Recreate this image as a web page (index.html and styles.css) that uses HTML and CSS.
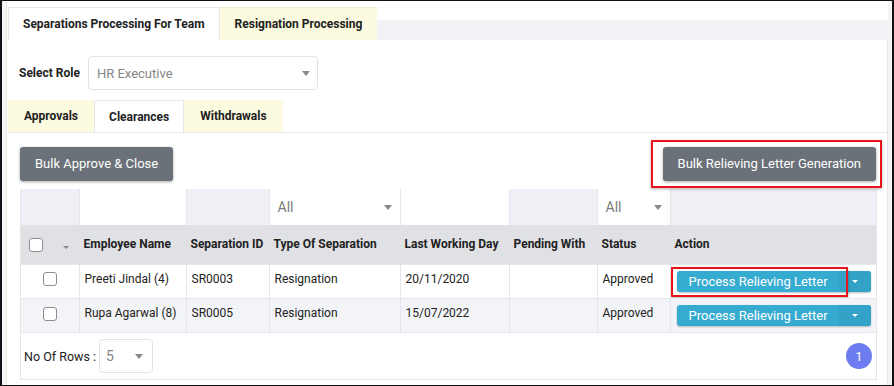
FILE: index.html
```html
<!DOCTYPE html>
<html lang="en">
<head>
  <meta charset="UTF-8">
  <meta name="viewport" content="width=device-width, initial-scale=1.0">
  <title>Separations Processing</title>
  <link rel="stylesheet" href="styles.css">
</head>
<body>
  <div class="frame">
    <div class="page">
      <!-- Top tabs -->
      <div class="tabs">
        <div class="tab active">Separations Processing For Team</div>
        <div class="tab">Resignation Processing</div>
        <div class="tab-fill"></div>
      </div>

      <div class="panel">
        <div class="role-row">
          <label>Select Role</label>
          <div class="select role-select">
            <span>HR Executive</span>
            <span class="caret"></span>
          </div>
        </div>

        <div class="subtabs">
          <div class="subtab">Approvals</div>
          <div class="subtab active">Clearances</div>
          <div class="subtab">Withdrawals</div>
        </div>

        <div class="subpanel">
          <div class="toolbar">
            <button class="btn btn-gray">Bulk Approve &amp; Close</button>
            <div class="highlight highlight-bulk">
              <button class="btn btn-gray">Bulk Relieving Letter Generation</button>
            </div>
          </div>

          <div class="grid">
            <table>
              <colgroup>
                <col style="width:58px">
                <col style="width:107px">
                <col style="width:83px">
                <col style="width:131px">
                <col style="width:109px">
                <col style="width:88px">
                <col style="width:73px">
                <col style="width:206px">
              </colgroup>
              <tr class="filter-row">
                <td></td>
                <td class="white"></td>
                <td></td>
                <td class="white"><div class="filter-select"><span>All</span><span class="caret"></span></div></td>
                <td class="white"></td>
                <td></td>
                <td class="white"><div class="filter-select"><span>All</span><span class="caret"></span></div></td>
                <td></td>
              </tr>
              <tr class="head-row">
                <th class="check-head"><span class="checkbox"></span><span class="sort-caret"></span></th>
                <th>Employee Name</th>
                <th>Separation ID</th>
                <th>Type Of Separation</th>
                <th>Last Working Day</th>
                <th>Pending With</th>
                <th>Status</th>
                <th>Action</th>
              </tr>
              <tr class="data-row">
                <td class="check-cell"><span class="checkbox"></span></td>
                <td>Preeti Jindal (4)</td>
                <td>SR0003</td>
                <td>Resignation</td>
                <td>20/11/2020</td>
                <td></td>
                <td>Approved</td>
                <td class="action-cell">
                  <div class="split-btn">
                    <span class="split-main">Process Relieving Letter</span>
                    <span class="split-caret"><span class="caret caret-white"></span></span>
                    <span class="mark"></span>
                  </div>
                </td>
              </tr>
              <tr class="data-row alt">
                <td class="check-cell"><span class="checkbox"></span></td>
                <td>Rupa Agarwal (8)</td>
                <td>SR0005</td>
                <td>Resignation</td>
                <td>15/07/2022</td>
                <td></td>
                <td>Approved</td>
                <td class="action-cell">
                  <div class="split-btn">
                    <span class="split-main">Process Relieving Letter</span>
                    <span class="split-caret"><span class="caret caret-white"></span></span>
                  </div>
                </td>
              </tr>
            </table>

            <div class="grid-footer">
              <div class="rows-box">
                <span>No Of Rows :</span>
                <div class="select rows-select">
                  <span>5</span>
                  <span class="caret"></span>
                </div>
              </div>
              <span class="page-badge">1</span>
            </div>
          </div>
        </div>
      </div>
    </div>
  </div>
</body>
</html>
```

FILE: styles.css
```css
* {
  box-sizing: border-box;
}

body {
  margin: 0;
  font-family: Roboto, 'Liberation Sans', Arial, sans-serif;
  color: #222;
  background: #fff;
}

.frame {
  width: 894px;
  height: 386px;
  border: 1px solid #111;
  border-left-width: 2px;
  border-right-width: 2px;
  padding: 0 4px 0 4px;
  background: #f4f5f8;
  overflow: hidden;
}

.page {
  height: 100%;
  display: flex;
  flex-direction: column;
  background: #fff;
  border-left: 1px solid #eceadb;
}

/* top tabs */
.tabs {
  display: flex;
  padding: 6px 0 0 1px;
  background: #fff;
}

.tab {
  height: 33px;
  padding: 0 15px;
  display: flex;
  align-items: center;
  font-size: 12px;
  font-weight: 700;
  background: #fcfadf;
  border-top: 1px solid #f3f0d0;
}

.tab.active {
  background: #fff;
  border: 1px solid #e6e6ea;
  border-bottom: none;
  padding: 0 14px;
}

.tab-fill {
  flex: 1;
  margin-top: 13px;
  background: #f2f3f7;
}

.panel {
  flex: 1;
  display: flex;
  flex-direction: column;
  border-right: 1px solid #e4e5ea;
}

.role-row {
  display: flex;
  align-items: center;
  gap: 8px;
  padding: 16px 0 0 12px;
}

.role-row label {
  font-size: 12px;
  font-weight: 700;
}

.select {
  display: flex;
  align-items: center;
  justify-content: space-between;
  border: 1px solid #e2e3e6;
  border-radius: 4px;
  color: #858585;
  background: #fff;
}

.role-select {
  width: 230px;
  height: 34px;
  padding: 0 7px 0 8px;
  font-size: 13px;
}

.caret {
  width: 0;
  height: 0;
  border-left: 4px solid transparent;
  border-right: 4px solid transparent;
  border-top: 5px solid #8a8a8a;
}

.caret-white {
  border-top-color: #fff;
  border-left-width: 3px;
  border-right-width: 3px;
  border-top-width: 3px;
}

/* sub tabs */
.subtabs {
  display: flex;
  margin-top: 10px;
  padding-left: 1px;
}

.subtab {
  height: 32px;
  display: flex;
  align-items: center;
  padding: 0 16px;
  font-size: 12px;
  font-weight: 700;
  background: #fcfadf;
}

.subtab.active {
  background: #fff;
  border: 1px solid #e6e6ea;
  border-bottom: none;
  padding: 0 14px;
}

.subpanel {
  flex: 1;
  border-top: 1px solid #eaebef;
  padding: 6px 10px 0 13px;
}

.toolbar {
  display: flex;
  justify-content: space-between;
  align-items: center;
  height: 49px;
  margin-right: -5px;
}

.btn {
  font-family: inherit;
  font-size: 13px;
  color: #fff;
  background: #6a7178;
  border: none;
  border-radius: 3px;
  height: 34px;
  padding: 0 15px;
  box-shadow: 0 1px 3px rgba(0, 0, 0, 0.35);
}

.highlight {
  border: 2px solid #e8141b;
  box-shadow: 0 1px 3px rgba(0, 0, 0, 0.3);
}

.highlight-bulk {
  padding: 5px 4px 5px 10px;
}

/* grid */
.grid {
  margin-top: 1px;
  border: 1px solid #e4e6ea;
  border-top: none;
}

table {
  width: 100%;
  border-collapse: collapse;
  table-layout: fixed;
  font-size: 12px;
}

td, th {
  border-left: 1px solid #e3e5ea;
  padding: 0 5px;
  text-align: left;
  white-space: nowrap;
  overflow: hidden;
}

tr > :first-child {
  border-left: none;
}

.filter-row td {
  height: 36px;
  background: #eef0f5;
}

.filter-row td.white {
  background: #fff;
}

.filter-select {
  display: flex;
  justify-content: space-between;
  align-items: center;
  color: #7c7c7c;
  font-size: 14px;
  padding: 0 3px 0 3px;
}

.head-row th {
  height: 39px;
  background: #e0e1e5;
  font-size: 12px;
  font-weight: 700;
  border-left-color: #e0e1e5;
  padding-left: 4px;
}

.head-row th.check-head {
  padding-left: 8px;
}

.checkbox {
  display: inline-block;
  width: 14px;
  height: 14px;
  border: 1px solid #8d8d8d;
  border-radius: 3px;
  background: #fff;
  vertical-align: middle;
}

.sort-caret {
  display: inline-block;
  margin-left: 20px;
  width: 0;
  height: 0;
  border-left: 3px solid transparent;
  border-right: 3px solid transparent;
  border-top: 3px solid #888;
  vertical-align: middle;
  position: relative;
  top: 3px;
}

.data-row td {
  height: 34px;
  background: #fff;
  border-top: 1px solid #e6e8ec;
  padding-bottom: 4px;
}

.data-row.alt td {
  background: #f3f4f8;
}

.data-row td.check-cell {
  text-align: center;
}

.data-row td.action-cell {
  padding: 0 5px 0 6px;
}

.split-btn {
  position: relative;
  display: flex;
  height: 21px;
  border-radius: 3px;
  background: #36abd0;
  color: #fff;
  font-size: 13px;
  box-shadow: 0 1px 2px rgba(0, 0, 0, 0.25);
}

.split-main {
  flex: 1;
  display: flex;
  align-items: center;
  padding-left: 12px;
}

.split-caret {
  width: 32px;
  display: flex;
  align-items: center;
  justify-content: center;
  background: #32a3c6;
  border-radius: 0 3px 3px 0;
}

/* red annotation box over the first row button */
.mark {
  position: absolute;
  left: -6px;
  top: -4px;
  width: 177px;
  height: 30px;
  border: 2px solid #e8141b;
  box-shadow: 0 1px 3px rgba(0, 0, 0, 0.3);
}

.grid-footer {
  height: 47px;
  border-top: 1px solid #e6e8ec;
  display: flex;
  align-items: center;
  justify-content: space-between;
  padding: 0 4px 0 3px;
  font-size: 12.5px;
}

.rows-box {
  display: flex;
  align-items: center;
  gap: 3px;
}

.rows-select {
  width: 54px;
  height: 34px;
  padding: 0 9px 0 6px;
  font-size: 14px;
}

.page-badge {
  width: 26px;
  height: 26px;
  border-radius: 50%;
  background: #6d7cf0;
  color: #fff;
  font-size: 13px;
  display: flex;
  align-items: center;
  justify-content: center;
}
```
